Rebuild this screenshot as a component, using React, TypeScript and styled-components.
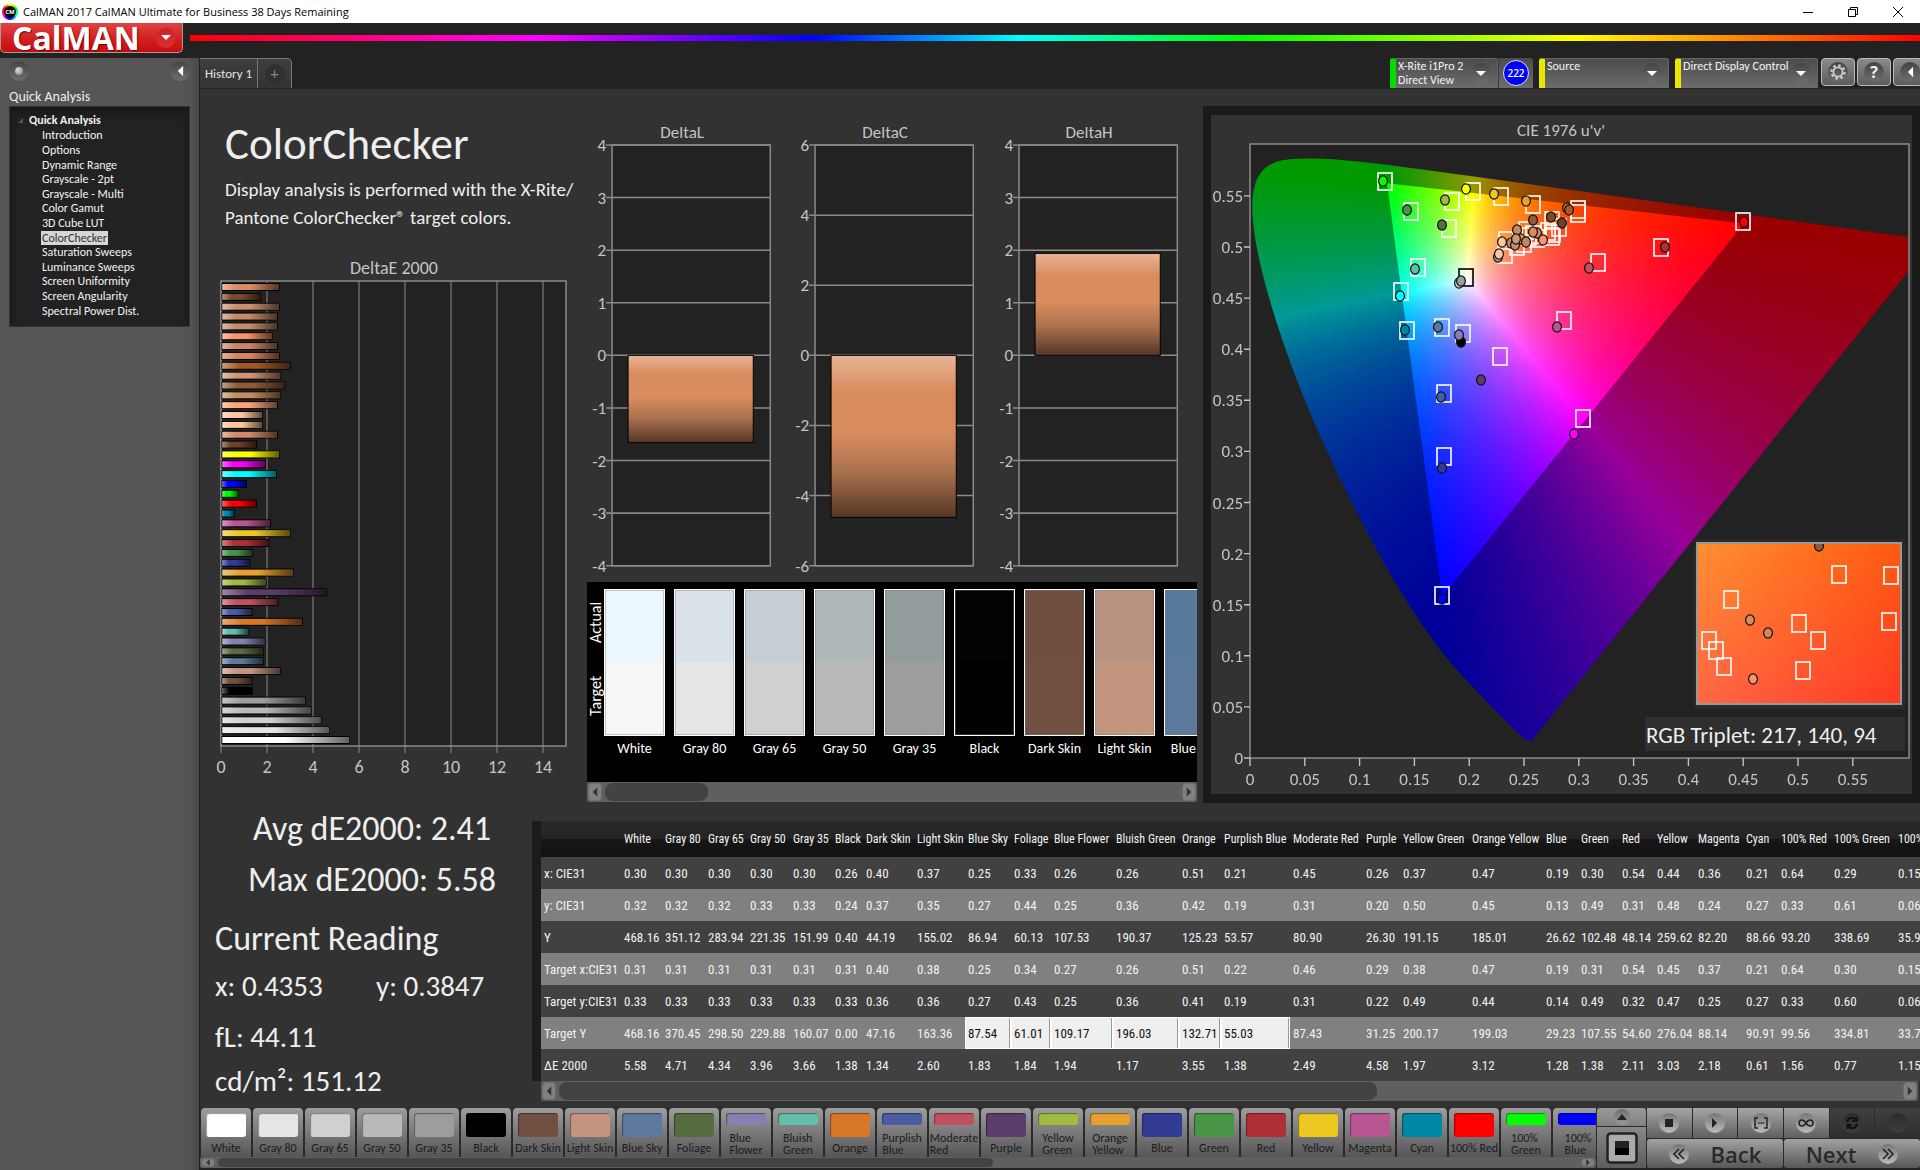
import React, { useLayoutEffect, useRef } from 'react';
import styled, { createGlobalStyle, css } from 'styled-components';

const UI = `Carlito, Calibri, Lato, sans-serif`;
const WIDE = `"Open Sans", "Noto Sans", sans-serif`;
const NARROW = `"Roboto Condensed", Carlito, sans-serif`;

const GlobalStyle = createGlobalStyle`
  * { box-sizing: border-box; }
  body { margin: 0; background: #222; color: #eee; font-family: ${UI}; }
  button { font-family: inherit; padding: 0; border: 0; color: inherit; cursor: pointer; }
  h1, h2, p, ul, dl, dd { margin: 0; padding: 0; }
`;

/* ---------- data ---------- */

type Patch = {
  name: string; target: string; actual: string; width: number;
  v: [string, string, string, string, string, string, string];
};

const patches: Patch[] = [
  { name: 'White', target: '#f6f6f6', actual: '#eaf7ff', width: 41, v: ['0.30', '0.32', '468.16', '0.31', '0.33', '468.16', '5.58'] },
  { name: 'Gray 80', target: '#e5e5e5', actual: '#d9e2e9', width: 43, v: ['0.30', '0.32', '351.12', '0.31', '0.33', '370.45', '4.71'] },
  { name: 'Gray 65', target: '#d0d0d0', actual: '#c5ced4', width: 42, v: ['0.30', '0.32', '283.94', '0.31', '0.33', '298.50', '4.34'] },
  { name: 'Gray 50', target: '#b9b9b9', actual: '#afb8bb', width: 43, v: ['0.30', '0.33', '221.35', '0.31', '0.33', '229.88', '3.96'] },
  { name: 'Gray 35', target: '#9d9d9d', actual: '#939c9d', width: 42, v: ['0.30', '0.33', '151.99', '0.31', '0.33', '160.07', '3.66'] },
  { name: 'Black', target: '#000000', actual: '#030306', width: 31, v: ['0.26', '0.24', '0.40', '0.31', '0.33', '0.00', '1.38'] },
  { name: 'Dark Skin', target: '#725041', actual: '#6e4e3f', width: 51, v: ['0.40', '0.37', '44.19', '0.40', '0.36', '47.16', '1.34'] },
  { name: 'Light Skin', target: '#c3957f', actual: '#b89382', width: 51, v: ['0.37', '0.35', '155.02', '0.38', '0.36', '163.36', '2.60'] },
  { name: 'Blue Sky', target: '#5d799d', actual: '#577a9d', width: 46, v: ['0.25', '0.27', '86.94', '0.25', '0.27', '87.54', '1.83'] },
  { name: 'Foliage', target: '#576c40', actual: '#576c40', width: 40, v: ['0.33', '0.44', '60.13', '0.34', '0.43', '61.01', '1.84'] },
  { name: 'Blue Flower', target: '#8480b0', actual: '#8480b0', width: 62, v: ['0.26', '0.25', '107.53', '0.27', '0.25', '109.17', '1.94'] },
  { name: 'Bluish Green', target: '#65bea9', actual: '#65bea9', width: 66, v: ['0.26', '0.36', '190.37', '0.26', '0.36', '196.03', '1.17'] },
  { name: 'Orange', target: '#d97728', actual: '#d97728', width: 42, v: ['0.51', '0.42', '125.23', '0.51', '0.41', '132.71', '3.55'] },
  { name: 'Purplish Blue', target: '#485ba3', actual: '#485ba3', width: 69, v: ['0.21', '0.19', '53.57', '0.22', '0.19', '55.03', '1.38'] },
  { name: 'Moderate Red', target: '#c25160', actual: '#c25160', width: 73, v: ['0.45', '0.31', '80.90', '0.46', '0.31', '87.43', '2.49'] },
  { name: 'Purple', target: '#5c3c69', actual: '#5c3c69', width: 37, v: ['0.26', '0.20', '26.30', '0.29', '0.22', '31.25', '4.58'] },
  { name: 'Yellow Green', target: '#9fbb42', actual: '#9fbb42', width: 69, v: ['0.37', '0.50', '191.15', '0.38', '0.49', '200.17', '1.97'] },
  { name: 'Orange Yellow', target: '#e6a12e', actual: '#e6a12e', width: 74, v: ['0.47', '0.45', '185.01', '0.47', '0.44', '199.03', '3.12'] },
  { name: 'Blue', target: '#323c95', actual: '#323c95', width: 35, v: ['0.19', '0.13', '26.62', '0.19', '0.14', '29.23', '1.28'] },
  { name: 'Green', target: '#489548', actual: '#489548', width: 41, v: ['0.30', '0.49', '102.48', '0.31', '0.49', '107.55', '1.38'] },
  { name: 'Red', target: '#ae2f38', actual: '#ae2f38', width: 35, v: ['0.54', '0.31', '48.14', '0.54', '0.32', '54.60', '2.11'] },
  { name: 'Yellow', target: '#ebc720', actual: '#ebc720', width: 41, v: ['0.44', '0.48', '259.62', '0.45', '0.47', '276.04', '3.03'] },
  { name: 'Magenta', target: '#ba5594', actual: '#ba5594', width: 48, v: ['0.36', '0.24', '82.20', '0.37', '0.25', '88.14', '2.18'] },
  { name: 'Cyan', target: '#0087a7', actual: '#0087a7', width: 35, v: ['0.21', '0.27', '88.66', '0.21', '0.27', '90.91', '0.61'] },
  { name: '100% Red', target: '#ff0000', actual: '#ff0000', width: 53, v: ['0.64', '0.33', '93.20', '0.64', '0.33', '99.56', '1.56'] },
  { name: '100% Green', target: '#00ff00', actual: '#00ff00', width: 64, v: ['0.29', '0.61', '338.69', '0.30', '0.60', '334.81', '0.77'] },
  { name: '100% Blue', target: '#0000ff', actual: '#0000ff', width: 64, v: ['0.15', '0.06', '35.94', '0.15', '0.06', '33.77', '1.15'] },
];

const rowLabels = ['x: CIE31', 'y: CIE31', 'Y', 'Target x:CIE31', 'Target y:CIE31', 'Target Y', 'ΔE 2000'];

const navItems = ['Introduction', 'Options', 'Dynamic Range', 'Grayscale - 2pt', 'Grayscale - Multi', 'Color Gamut', '3D Cube LUT',
  'ColorChecker', 'Saturation Sweeps', 'Luminance Sweeps', 'Screen Uniformity', 'Screen Angularity', 'Spectral Power Dist.'];

const deltaE: [string, number][] = [
  ['#d98c5e', 2.56], ['#7a4a2a', 1.75], ['#cb8f6c', 2.56], ['#c48b69', 2.48], ['#c18d6c', 2.48], ['#fa946e', 2.25],
  ['#cb8564', 2.48], ['#d5845c', 2.56], ['#a25a24', 3.05], ['#cf9672', 2.62], ['#8e5c36', 2.8], ['#c28d5f', 2.62],
  ['#ffa37b', 2.48], ['#ffc4a4', 1.82], ['#ffc798', 1.82], ['#d08a69', 2.48], ['#6f412a', 1.56], ['#ffff00', 2.56],
  ['#ff00ff', 1.95], ['#00ffff', 2.43], ['#0000ff', 1.13], ['#00ff00', 0.77], ['#ff0000', 1.56], ['#0087a7', 0.61],
  ['#ba5594', 2.18], ['#ebc720', 3.03], ['#ae2f38', 2.11], ['#489548', 1.38], ['#323c95', 1.28], ['#e6a12e', 3.16],
  ['#9fbb42', 1.99], ['#5c3c69', 4.6], ['#c25160', 2.49], ['#485ba3', 1.38], ['#d97728', 3.57], ['#65bea9', 1.2],
  ['#8480b0', 1.94], ['#576c40', 1.86], ['#5d799d', 1.86], ['#c3957f', 2.6], ['#725041', 1.37], ['#000000', 1.38],
  ['#9d9d9d', 3.69], ['#b9b9b9', 3.94], ['#d0d0d0', 4.37], ['#e5e5e5', 4.73], ['#ffffff', 5.6],
];

/* ---------- window chrome ---------- */

const Shell = styled.div`display: flex; flex-direction: column; min-height: 100vh; min-width: 1200px; overflow: hidden;`;

const TitleBar = styled.header`
  display: flex; align-items: center; height: 23px; padding-left: 2px; background: #fff; color: #000;
  font: 11px ${WIDE};
`;
const TitleText = styled.span`flex: 1; margin-left: 5px;`;
const AppBadge = styled.span`
  display: grid; place-items: center; width: 16px; height: 16px; border-radius: 50%;
  background: conic-gradient(#ff0, #0f0, #0ff, #00f, #f0f, #f00, #ff0);
  &::before { content: ''; grid-area: 1 / 1; width: 12px; height: 12px; border-radius: 50%; background: #000; }
`;
const AppBadgeText = styled.b`grid-area: 1 / 1; font: 700 6px ${WIDE}; color: #fff;`;
const WindowButton = styled.button`display: grid; place-items: center; width: 45px; height: 20px; background: none;`;

const BrandBar = styled.div`display: flex; align-items: flex-start; height: 35px; background: #222;`;
const BrandButton = styled.button`
  display: flex; align-items: center; justify-content: space-between; width: 183px; height: 30px; padding: 0 6px 0 11px;
  background: linear-gradient(#e04444, #d12020 55%, #c80c0c); border: 1px solid #a99; border-top: 0; border-radius: 0 0 5px 5px;
  color: #fff; text-shadow: 1px 1px 1px #600;
`;
const BrandName = styled.span`font: 700 32px/28px ${WIDE};`;
const Rainbow = styled.div`
  flex: 1; height: 6px; margin: 12px 0 0 7px;
  background: linear-gradient(90deg, #f00, #f0f 20%, #00f 36%, #0ff 48%, #0f0 61%, #ff0 80%, #f00);
`;

const Knob = styled.span<{ $red?: boolean; $light?: boolean }>`
  display: grid; place-items: center; flex: none; width: 20px; height: 20px; border-radius: 50%;
  background: ${p => p.$red ? 'linear-gradient(#c8222a, #dc3030)' : p.$light ? 'linear-gradient(#777, #bbb)' : 'linear-gradient(#444, #6e6e6e)'};
`;

const Body = styled.div`flex: 1; display: grid; grid-template-columns: 200px minmax(0, 1fr);`;

/* ---------- sidebar ---------- */

const Sidebar = styled.aside`padding: 3px 9px; background: linear-gradient(90deg, #555 190px, #474747); border-right: 1px solid #222;`;
const SideTools = styled.div`display: flex; justify-content: space-between;`;
const SideButton = styled.button`background: none; height: 20px;`;
const Ball = styled.i`width: 8px; height: 8px; border-radius: 50%; background: radial-gradient(circle at 35% 35%, #ddd, #777);`;
const SideHeading = styled.h2`margin: 6px 0 0; font: 14px/19px ${UI};`;
const Tree = styled.nav`height: 221px; padding: 5px 0 0 8px; background: #222; border: 1px solid #333; box-shadow: inset 0 6px 8px #181818; color: #f2f2f2;`;
const TreeRoot = styled.div`display: flex; align-items: center; gap: 6px; font: 700 12px/16px ${UI};`;
const TreeList = styled.ul`display: grid; grid-auto-rows: minmax(0, 1fr); height: 190px; padding-left: 23px; list-style: none;`;
const TreeItem = styled.li`display: flex; align-items: center;`;
const TreeLink = styled.a<{ $on?: boolean }>`
  padding: 0 1px; font: 12px/14px ${UI}; color: inherit; text-decoration: none;
  ${p => p.$on && css`background: #d6d6d6; color: #333;`}
`;

/* ---------- content header ---------- */

const Content = styled.main`display: flex; flex-direction: column;`;
const TopBar = styled.div`display: flex; height: 30px; background: #222; overflow: hidden;`;
const Tabs = styled.div`display: flex; flex: 1;`;
const Tab = styled.button<{ $last?: boolean }>`
  display: grid; place-items: center; width: ${p => p.$last ? 34 : 58}px; height: 30px; font-size: 13px; color: #e4e4e4;
  background: linear-gradient(#3e3e3e, #333); border: solid #777; border-width: 1px 1px 0 0;
  border-radius: 0 ${p => p.$last ? 5 : 0}px 0 0;
`;
const AddMark = styled.span`width: 20px; border-radius: 50%; background: #303030; color: #8a8a8a; font: 16px/20px ${UI};`;
const Devices = styled.div`display: flex; gap: 6px; margin-right: 3px;`;
const Device = styled.button<{ $c: string; $w: number }>`
  display: flex; justify-content: space-between; width: ${p => p.$w}px; height: 30px; padding: 0 6px 0 2px; text-align: left;
  font: 12px/14px ${UI}; color: #f2f2f2; background: linear-gradient(#4c4c4c, #6c6c6c); border: solid #666; border-width: 1px 1px 0 0;
  border-radius: 3px 3px 0 0; border-left: 6px solid ${p => p.$c};
`;
const DeviceArrow = styled.span`display: grid; padding-top: 4px;`;
const MeterGroup = styled.div`display: flex;`;
const MeterCount = styled.button`
  display: grid; place-items: center; width: 35px; height: 30px; background: linear-gradient(#4c4c4c, #6c6c6c);
  border-radius: 0 3px 0 0; border-left: 1px solid #3a3a3a;
`;
const CountDot = styled.span`
  display: grid; place-items: center; width: 26px; height: 26px; border-radius: 50%; border: 1px solid #dde; background: #00f;
  font: 600 10px ${WIDE}; color: #fff;
`;
const ToolButtons = styled.div`display: flex; gap: 2px; width: 99px; overflow: hidden;`;
const ToolButton = styled.button`
  display: grid; place-items: center; flex: none; width: 34px; height: 28px; border: 1px solid #bbb; border-radius: 4px;
  background: linear-gradient(#8a8a8a, #5c5c5c);
`;
const HelpMark = styled.b`font: 700 16px/18px ${WIDE}; color: #eee;`;

/* ---------- workspace ---------- */

const Workspace = styled.section`flex: 1; padding-bottom: 5px; background: #323232; box-shadow: inset 0 1px #222;`;
const Upper = styled.div`display: grid; grid-template-columns: minmax(0, 387fr) minmax(0, 616fr) minmax(0, 717fr); align-items: start;`;
const Title = styled.h1`padding: 24px 0 0 25px; font: 45px/64px ${UI};`;
const Lead = styled.p`padding-left: 25px; margin-bottom: 23px; font: 19px/28px ${UI}; white-space: nowrap;`;
const Chart = styled.svg`display: block; width: 100%; height: auto; font-family: ${UI}; fill: #c4c4c4;`;

const Middle = styled.div`padding: 34px 6px 0 0;`;
const DeltaRow = styled.div`display: grid; grid-template-columns: repeat(3, 1fr);`;

const SwatchPanel = styled.div`display: flex; height: 200px; padding-top: 7px; background: #000; overflow: hidden;`;
const SideLabels = styled.div`display: grid; grid-template-rows: 66px 81px; flex: none; width: 17px; height: 147px;`;
const SideLabel = styled.span`display: grid; place-items: center; writing-mode: vertical-rl; transform: rotate(180deg); font: 16px/17px ${UI}; color: #fff;`;
const SwatchList = styled.div`display: flex; gap: 9px; min-width: 0; overflow: hidden;`;
const Swatch = styled.figure`flex: none; width: 61px; margin: 0;`;
const SwatchColor = styled.div<{ $a: string; $t: string }>`
  height: 147px; border: 1px solid #fff; background: linear-gradient(${p => p.$a} 50%, ${p => p.$t} 50%);
  box-shadow: inset 0 0 0 1px rgba(120, 120, 120, .4);
`;
const SwatchName = styled.figcaption`text-align: center; font: 14px/26px ${UI}; color: #fff; white-space: nowrap;`;

const Track = styled.div<{ $h: number }>`display: flex; gap: 3px; height: ${p => p.$h}px; padding: 1px; background: #5f5f5f; border-radius: 2px;`;
const TrackArrow = styled.button`display: grid; place-items: center; flex: none; width: 14px; background: #808080; border: 1px solid #6c6c6c; border-radius: 4px;`;
const TrackLane = styled.div`flex: 1; display: flex;`;
const Thumb = styled.div<{ $share: number }>`width: ${p => p.$share}%; background: #434343; border-radius: 8px;`;

const CiePanel = styled.div`margin-top: 18px; padding: 9px 8px; background: #1a1a1a;`;
const CieInner = styled.div`background: #323232;`;
const Diagram = styled.canvas`display: block; width: 100%; height: 100%;`;

const Lower = styled.div`display: grid; grid-template-columns: 332px minmax(0, 1fr);`;
const Readings = styled.div`white-space: nowrap; color: #eee;`;
const Stat = styled.p`padding-left: 12px; text-align: center; font: 34px/51px ${UI};`;
const ReadingHead = styled.h2`margin-top: 8px; padding-left: 15px; font: 34px/51px ${UI};`;
const ReadingPair = styled.div`display: grid; grid-template-columns: 161px 1fr; margin-bottom: 7px; padding-left: 15px;`;
const Reading = styled.p`font: 29px/44px ${UI};`;
const ReadingBlock = styled.div`padding-left: 15px;`;

const TableArea = styled.div`padding-top: 18px; overflow: hidden;`;
const TableClip = styled.div`overflow: hidden; border-left: 9px solid #1c1c1c; background: #414141;`;
const Table = styled.table`table-layout: fixed; width: 1418px; border-collapse: collapse; font-family: ${NARROW}; color: #f2f2f2; white-space: nowrap;`;
const HeadCell = styled.th`
  height: 36px; padding: 0 0 0 3px; text-align: left; font-size: 12px; font-weight: 400;
  background: linear-gradient(#2a2a2a, #242424 49%, #171717 50%, #111);
`;
const Row = styled.tr`height: 32px; background: #414141; &:nth-child(even) { background: #808080; }`;
const cell = css`padding: 0 0 0 3px; text-align: left; font-size: 13px; font-weight: 400;`;
const RowHead = styled.th`${cell}`;
const Cell = styled.td<{ $hot?: boolean }>`
  ${cell}
  ${p => p.$hot && css`background: #efefef; color: #111; box-shadow: inset 0 0 0 1px #fff, inset -2px 0 #999;`}
`;
const TableTrack = styled.div`padding: 0 2px 0 9px;`;

/* ---------- bottom toolbar ---------- */

const BottomBar = styled.footer`display: flex; height: 62px; background: #2a2a2a; border-bottom: 2px solid #222;`;
const Palette = styled.div`flex: 1; min-width: 0;`;
const PatchRow = styled.div`display: flex; gap: 2px; height: 49px; padding-left: 1px; overflow: hidden;`;
const PatchButton = styled.button`
  display: flex; flex-direction: column; align-items: center; justify-content: space-between; flex: none; width: 50px; height: 49px;
  padding: 5px 0 1px; border-radius: 4px 4px 0 0; background: linear-gradient(#9c9c9c, #7d7d7d 45%, #565656);
  font: 12px/12px ${UI}; color: #1c1c1c; text-align: left;
`;
const PatchChip = styled.span<{ $c: string; $low: boolean }>`
  width: 40px; height: ${p => p.$low ? 12 : 24}px; border-radius: 3px; background: ${p => p.$c}; box-shadow: inset 1px 1px 1px rgba(0, 0, 0, .4);
`;
const PatchName = styled.span<{ $wrap: boolean }>`white-space: ${p => p.$wrap ? 'pre-line' : 'nowrap'}; padding-bottom: ${p => p.$wrap ? 0 : 2}px;`;

const View = styled.div`display: flex; flex-direction: column; gap: 1px; width: 49px; margin: 0 1px;`;
const ViewUp = styled.button`display: grid; place-items: center; height: 18px; overflow: hidden; border-radius: 3px 3px 0 0; background: linear-gradient(#999, #808080);`;
const SmallKnob = styled.span`display: grid; place-items: center; width: 16px; height: 16px; border-radius: 50%; background: linear-gradient(#707070, #999);`;
const ViewStop = styled.button`display: grid; place-items: center; flex: 1; background: linear-gradient(#888, #5c5c5c);`;
const Transport = styled.div`display: grid; grid-template: 30px 29px / repeat(6, 1fr); gap: 1px; width: 273px;`;
const TransportButton = styled.button<{ $off?: boolean }>`
  display: grid; place-items: center; background: ${p => p.$off ? 'linear-gradient(#404040, #2e2e2e)' : 'linear-gradient(#a6a6a6, #5f5f5f)'};
`;
const DarkKnob = styled(Knob)`background: linear-gradient(#2c2c2c, #3e3e3e);`;
const StepButton = styled.button`
  grid-column: span 3; display: flex; align-items: center; justify-content: center; gap: 22px;
  background: linear-gradient(#a2a2a2, #585858); border-radius: 3px; font: 600 22px/28px ${WIDE}; color: #2a2a2a;
`;

/* ---------- small drawings ---------- */

const Down = () => <svg width="12" height="7" aria-hidden="true"><path d="M1 1h10L6 6z" fill="#fff" /></svg>;
const Left = ({ c = '#fff', w = 8, h = 12 }: { c?: string; w?: number; h?: number }) => (
  <svg width={w} height={h} viewBox="0 0 8 12" aria-hidden="true"><path d="M7 0v12L1 6z" fill={c} /></svg>
);
const Right = ({ c = '#333', w = 7, h = 10 }: { c?: string; w?: number; h?: number }) => (
  <svg width={w} height={h} viewBox="0 0 8 12" aria-hidden="true"><path d="M1 0v12l6-6z" fill={c} /></svg>
);
const Chevrons = ({ flip }: { flip?: boolean }) => (
  <svg width="14" height="14" viewBox="0 0 14 14" fill="none" stroke="#222" strokeWidth="1.6" aria-hidden="true">
    <path d={flip ? 'M2 2l5 5-5 5M7 2l5 5-5 5' : 'M7 2L2 7l5 5M12 2L7 7l5 5'} />
  </svg>
);
const Gear = () => (
  <svg width="18" height="18" viewBox="0 0 18 18" fill="none" stroke="#d0d0d0" aria-hidden="true">
    <circle cx="9" cy="9" r="4.6" strokeWidth="1.8" />
    <circle cx="9" cy="9" r="6.6" strokeWidth="2.2" strokeDasharray="2.6 2.58" />
  </svg>
);

function ScrollTrack({ height, share, label }: { height: number; share: number; label: string }) {
  return (
    <Track $h={height}>
      <TrackArrow aria-label={`${label} left`}><Left c="#333" w={6} h={height > 14 ? 12 : 7} /></TrackArrow>
      <TrackLane><Thumb $share={share} /></TrackLane>
      <TrackArrow aria-label={`${label} right`}><Right w={6} h={height > 14 ? 12 : 7} /></TrackArrow>
    </Track>
  );
}

/* ---------- charts ---------- */

function DeltaEChart() {
  const unit = 23;
  const pitch = 453 / 46;
  return (
    <Chart viewBox="0 0 387 528" role="img" aria-label="DeltaE 2000">
      <defs>
        <linearGradient id="sheenX">
          <stop offset="0" stopColor="#fff" stopOpacity=".4" /><stop offset=".25" stopColor="#fff" stopOpacity="0" />
          <stop offset=".5" stopColor="#000" stopOpacity="0" /><stop offset="1" stopColor="#000" stopOpacity=".62" />
        </linearGradient>
      </defs>
      <text x="194" y="19" fontSize="18" textAnchor="middle">DeltaE 2000</text>
      <rect x="21" y="26" width="345" height="465" fill="#222" stroke="#8a8a8a" strokeWidth="1.5" />
      {[0, 2, 4, 6, 8, 10, 12, 14].map(n => (
        <g key={n}>
          <path d={`M${21 + n * unit} 26v472`} stroke="#8a8a8a" />
          <text x={21 + n * unit} y="518" fontSize="18" textAnchor="middle">{n}</text>
        </g>
      ))}
      {deltaE.map(([c, v], i) => (
        <g key={i}>
          <rect x="22" y={28.5 + i * pitch} width={v * unit - 1.5} height="7" fill={c} stroke="#000" />
          <rect x="22" y={29 + i * pitch} width={v * unit - 2} height="6" fill="url(#sheenX)" />
        </g>
      ))}
    </Chart>
  );
}

function DeltaChart({ name, max, step, value }: { name: string; max: number; step: number; value: number }) {
  const y = (n: number) => 23 + (max - n) * 420 / (2 * max);
  const ticks: number[] = [];
  for (let n = max; n >= -max; n -= step) ticks.push(n);
  const top = Math.min(y(0), y(value));
  const size = Math.abs(y(0) - y(value));
  return (
    <Chart viewBox="0 0 203 459" role="img" aria-label={name}>
      <defs>
        <linearGradient id={`sheen${name}`} x2="0" y2="1">
          <stop offset="0" stopColor="#e8b596" /><stop offset=".22" stopColor="#d98c5e" />
          <stop offset=".48" stopColor="#d98c5e" /><stop offset=".72" stopColor="#a9714e" /><stop offset="1" stopColor="#563626" />
        </linearGradient>
      </defs>
      <text x="95" y="16" fontSize="17" textAnchor="middle">{name}</text>
      <rect x="25" y="23" width="158" height="420" fill="#222" stroke="#8a8a8a" strokeWidth="1.5" />
      {ticks.map(n => (
        <g key={n}>
          <path d={`M19 ${y(n)}h164`} stroke="#8a8a8a" strokeWidth="1.5" />
          <text x="19" y={y(n) + 6} fontSize="17" textAnchor="end">{n}</text>
        </g>
      ))}
      <rect x="41" y={top} width="125" height={size} fill={`url(#sheen${name})`} stroke="#000" />
    </Chart>
  );
}

const locusXY: [number, number][] = [
  [.1741, .005], [.1714, .0051], [.1689, .0069], [.1644, .0109], [.1566, .0177], [.144, .0297], [.1355, .0399], [.1241, .0578],
  [.1096, .0868], [.0913, .1327], [.0687, .2007], [.0454, .295], [.0235, .4127], [.0082, .5384], [.0039, .6548], [.0139, .7502],
  [.0389, .812], [.0743, .8338], [.1142, .8262], [.1547, .8059], [.1929, .7816], [.2296, .7543], [.3016, .6923], [.3731, .6245],
  [.4441, .5547], [.5125, .4866], [.5752, .4242], [.627, .3725], [.6658, .334], [.6915, .3083], [.719, .2809], [.7347, .2653],
];
const PLOT_W = 659;
const PLOT_H = 614;
const SX = 1096;
const SY = 1022;
const plotPoint = ([x, y]: [number, number]): [number, number] => {
  const d = -2 * x + 12 * y + 3;
  return [4 * x / d * SX, PLOT_H - 9 * y / d * SY];
};

/* Fills the locus with the brightest linear RGB of each chromaticity, dimmed outside the Rec. 709 triangle. */
function Chromaticity() {
  const ref = useRef<HTMLCanvasElement>(null);
  useLayoutEffect(() => {
    const ctx = ref.current?.getContext('2d');
    if (!ctx) return;
    const img = ctx.createImageData(PLOT_W, PLOT_H);
    for (let py = 0; py < PLOT_H; py++) {
      for (let px = 0; px < PLOT_W; px++) {
        const u = px / SX;
        const v = Math.max((PLOT_H - py) / SY, .001);
        const d = 6 * u - 16 * v + 12;
        const x = 9 * u / d;
        const y = 4 * v / d;
        const X = x / y;
        const Z = (1 - x - y) / y;
        const rgb = [3.2406 * X - 1.5372 - .4986 * Z, -.9689 * X + 1.8758 + .0415 * Z, .0557 * X - .204 + 1.057 * Z].map(c => Math.max(c, 0));
        const m = Math.max(...rgb) || 1;
        const o = (py * PLOT_W + px) * 4;
        rgb.forEach((c, k) => { img.data[o + k] = 255 * c / m; });
        img.data[o + 3] = 255;
      }
    }
    ctx.putImageData(img, 0, 0);
    ctx.beginPath();
    ctx.rect(0, 0, PLOT_W, PLOT_H);
    ([[.64, .33], [.3, .6], [.15, .06]] as [number, number][]).map(plotPoint).forEach(([x, y], i) => i ? ctx.lineTo(x, y) : ctx.moveTo(x, y));
    ctx.closePath();
    ctx.fillStyle = 'rgba(0, 0, 0, .4)';
    ctx.fill('evenodd');
    ctx.globalCompositeOperation = 'destination-in';
    ctx.beginPath();
    const pts = locusXY.map(plotPoint);
    ctx.moveTo(...pts[0]);
    for (let i = 1; i < pts.length - 1; i++) {
      ctx.quadraticCurveTo(pts[i][0], pts[i][1], (pts[i][0] + pts[i + 1][0]) / 2, (pts[i][1] + pts[i + 1][1]) / 2);
    }
    ctx.lineTo(...pts[pts.length - 1]);
    ctx.closePath();
    ctx.fillStyle = '#000';
    ctx.fill();
  }, []);
  return <Diagram ref={ref} width={PLOT_W} height={PLOT_H} />;
}

const targets: [number, number][] = [
  [174, 66], [262, 76], [290, 81], [322, 89], [241, 86], [200, 96], [238, 113], [367, 94], [367, 98], [532, 106], [450, 132],
  [387, 147], [207, 152], [190, 176], [196, 215], [231, 212], [252, 218], [289, 241], [353, 205], [233, 278], [372, 303],
  [233, 341], [231, 480], [294, 139], [295, 125], [306, 131], [315, 115], [326, 123], [341, 105], [337, 116], [341, 121],
  [348, 112], [342, 118], [318, 121], [313, 128], [322, 119],
];
const measured: [number, number, string][] = [
  [172, 66, '#00ff00'], [255, 74, '#ffff00'], [283, 79, '#ebc720'], [315, 86, '#e6a12e'], [234, 85, '#9fbb42'], [196, 95, '#489548'],
  [231, 110, '#576c40'], [356, 93, '#d97728'], [358, 95, '#a25a24'], [533, 107, '#ff0000'], [454, 132, '#ae2f38'], [378, 153, '#c25160'],
  [204, 154, '#65bea9'], [248, 168, '#d0d0d0'], [250, 166, '#9d9d9d'], [189, 181, '#00ffff'], [194, 215, '#0087a7'], [227, 212, '#5d799d'],
  [250, 227, '#000000'], [248, 220, '#8480b0'], [270, 265, '#5c3c69'], [346, 212, '#ba5594'], [230, 282, '#485ba3'], [363, 319, '#ff00ff'],
  [231, 353, '#323c95'], [231, 484, '#0000ff'], [340, 102, '#7a4a2a'], [351, 108, '#6f412a'], [322, 105, '#8e5c36'], [306, 115, '#c28d5f'],
  [287, 142, '#c3957f'], [288, 139, '#ffc4a4'], [291, 127, '#ffc798'], [300, 128, '#c18d6c'], [304, 130, '#c48b69'], [310, 124, '#cb8f6c'],
  [305, 124, '#cf9672'], [315, 127, '#cb8564'], [326, 118, '#d5845c'], [322, 117, '#d98c5e'], [332, 125, '#fa946e'],
];
const insetTargets: [number, number][] = [
  [628, 459], [680, 460], [520, 484], [588, 508], [678, 506], [498, 525], [505, 535], [513, 551], [607, 525], [592, 555],
];
const insetMeasured: [number, number, string][] = [[608, 431, '#8e5c36'], [539, 505, '#d98c5e'], [557, 518, '#d5845c'], [542, 564, '#fa946e']];

const Square = ({ x, y, c = '#fff' }: { x: number; y: number; c?: string }) => (
  <rect x={x - 7} y={y - 8} width="14" height="17" fill="none" stroke={c} strokeWidth="1.6" />
);
const Dot = ({ x, y, c }: { x: number; y: number; c: string }) => <ellipse cx={x} cy={y} rx="4.4" ry="5.2" fill={c} stroke="#111" strokeWidth="1.2" />;

function CieChart() {
  const ticks = Array.from({ length: 12 }, (_, i) => i * .05);
  const label = (n: number) => String(Math.round(n * 100) / 100);
  return (
    <Chart viewBox="0 0 701 679" role="img" aria-label="CIE 1976 u'v'">
      <defs>
        <linearGradient id="insetA"><stop stopColor="#ff9030" /><stop offset="1" stopColor="#ff5a12" /></linearGradient>
        <linearGradient id="insetB"><stop stopColor="#ff6646" /><stop offset="1" stopColor="#ff3a22" /></linearGradient>
        <linearGradient id="fade" x2="0" y2="1"><stop stopColor="#000" /><stop offset="1" stopColor="#fff" /></linearGradient>
        <mask id="fadeMask"><rect x="486" y="428" width="204" height="161" fill="url(#fade)" /></mask>
        <clipPath id="insetClip"><rect x="487" y="429" width="202" height="159" /></clipPath>
      </defs>
      <text x="350" y="21" fontSize="17" textAnchor="middle">CIE 1976 u'v'</text>
      <rect x="39" y="29" width={PLOT_W} height={PLOT_H} fill="#222" />
      <foreignObject x="39" y="29" width={PLOT_W} height={PLOT_H}><Chromaticity /></foreignObject>
      <rect x="39" y="29" width={PLOT_W} height={PLOT_H} fill="none" stroke="#8a8a8a" strokeWidth="1.5" />
      {ticks.map(n => (
        <g key={n}>
          <path d={`M${39 + n * SX} 643v8M33 ${643 - n * SY}h6`} stroke="#c4c4c4" strokeWidth="1.4" />
          <text x={39 + n * SX} y="670" fontSize="17" textAnchor="middle">{label(n)}</text>
          <text x="32" y={649 - n * SY} fontSize="17" textAnchor="end">{label(n)}</text>
        </g>
      ))}
      {targets.map(([x, y], i) => <Square key={i} x={x} y={y} />)}
      <Square x={255} y={162} c="#000" />
      {measured.map(([x, y, c], i) => <Dot key={i} x={x} y={y} c={c} />)}
      <rect x="483" y="424" width="211" height="170" fill="#2a2a2a" />
      <rect x="486" y="428" width="204" height="161" fill="url(#insetA)" />
      <rect x="486" y="428" width="204" height="161" fill="url(#insetB)" mask="url(#fadeMask)" />
      <g clipPath="url(#insetClip)">
        {insetTargets.map(([x, y], i) => <Square key={i} x={x} y={y} />)}
        {insetMeasured.map(([x, y, c], i) => <Dot key={i} x={x} y={y} c={c} />)}
      </g>
      <rect x="486" y="428" width="204" height="161" fill="none" stroke="#999" strokeWidth="2" />
      <rect x="434" y="602" width="260" height="34" fill="#2f2f2f" />
      <text x="435" y="628" fontSize="23" fill="#eee">RGB Triplet: 217, 140, 94</text>
    </Chart>
  );
}

/* ---------- page ---------- */

export default function App() {
  return (
    <Shell>
      <GlobalStyle />
      <TitleBar>
        <AppBadge><AppBadgeText>CM</AppBadgeText></AppBadge>
        <TitleText>CalMAN 2017 CalMAN Ultimate for Business 38 Days Remaining</TitleText>
        <WindowButton aria-label="Minimize"><svg width="10" height="10"><path d="M0 5.5h10" stroke="#000" /></svg></WindowButton>
        <WindowButton aria-label="Restore">
          <svg width="10" height="10" fill="none" stroke="#000"><path d="M.5 2.5h7v7h-7zM2.5 2.5v-2h7v7h-2" /></svg>
        </WindowButton>
        <WindowButton aria-label="Close"><svg width="10" height="10"><path d="M0 0l10 10M10 0L0 10" stroke="#000" /></svg></WindowButton>
      </TitleBar>
      <BrandBar>
        <BrandButton><BrandName>CalMAN</BrandName><Knob $red><Down /></Knob></BrandButton>
        <Rainbow />
      </BrandBar>
      <Body>
        <Sidebar>
          <SideTools>
            <SideButton aria-label="Pin"><Knob><Ball /></Knob></SideButton>
            <SideButton aria-label="Collapse"><Knob><Left w={7} /></Knob></SideButton>
          </SideTools>
          <SideHeading>Quick Analysis</SideHeading>
          <Tree>
            <TreeRoot><svg width="5" height="5" aria-hidden="true"><path d="M5 0v5H0z" fill="#555" /></svg>Quick Analysis</TreeRoot>
            <TreeList>
              {navItems.map(n => <TreeItem key={n}><TreeLink href="#" $on={n === 'ColorChecker'}>{n}</TreeLink></TreeItem>)}
            </TreeList>
          </Tree>
        </Sidebar>
        <Content>
          <TopBar>
            <Tabs>
              <Tab>History 1</Tab>
              <Tab $last aria-label="Add tab"><AddMark>+</AddMark></Tab>
            </Tabs>
            <Devices>
              <MeterGroup>
                <Device $c="#0d0" $w={108}><span>X-Rite i1Pro 2<br />Direct View</span><DeviceArrow><Knob><Down /></Knob></DeviceArrow></Device>
                <MeterCount><CountDot>222</CountDot></MeterCount>
              </MeterGroup>
              <Device $c="#e8e800" $w={130}><span>Source</span><DeviceArrow><Knob><Down /></Knob></DeviceArrow></Device>
              <Device $c="#e8e800" $w={143}><span>Direct Display Control</span><DeviceArrow><Knob><Down /></Knob></DeviceArrow></Device>
            </Devices>
            <ToolButtons>
              <ToolButton aria-label="Settings"><Knob><Gear /></Knob></ToolButton>
              <ToolButton aria-label="Help"><Knob><HelpMark>?</HelpMark></Knob></ToolButton>
              <ToolButton aria-label="Collapse panel"><Knob><Left w={7} /></Knob></ToolButton>
            </ToolButtons>
          </TopBar>
          <Workspace>
            <Upper>
              <div>
                <Title>ColorChecker</Title>
                <Lead>Display analysis is performed with the X-Rite/<br />Pantone ColorChecker® target colors.</Lead>
                <DeltaEChart />
              </div>
              <Middle>
                <DeltaRow>
                  <DeltaChart name="DeltaL" max={4} step={1} value={-1.66} />
                  <DeltaChart name="DeltaC" max={6} step={2} value={-4.62} />
                  <DeltaChart name="DeltaH" max={4} step={1} value={1.94} />
                </DeltaRow>
                <SwatchPanel>
                  <SideLabels><SideLabel>Actual</SideLabel><SideLabel>Target</SideLabel></SideLabels>
                  <SwatchList>
                    {patches.slice(0, 9).map(p => (
                      <Swatch key={p.name}><SwatchColor $a={p.actual} $t={p.target} /><SwatchName>{p.name}</SwatchName></Swatch>
                    ))}
                  </SwatchList>
                </SwatchPanel>
                <ScrollTrack height={20} share={18} label="Scroll swatches" />
              </Middle>
              <CiePanel><CieInner><CieChart /></CieInner></CiePanel>
            </Upper>
            <Lower>
              <Readings>
                <Stat>Avg dE2000: 2.41</Stat>
                <Stat>Max dE2000: 5.58</Stat>
                <ReadingHead>Current Reading</ReadingHead>
                <ReadingPair><Reading>x: 0.4353</Reading><Reading>y: 0.3847</Reading></ReadingPair>
                <ReadingBlock><Reading>fL: 44.11</Reading><Reading>cd/m²: 151.12</Reading></ReadingBlock>
              </Readings>
              <TableArea>
                <TableClip>
                  <Table>
                    <colgroup><col width={80} />{patches.map(p => <col key={p.name} width={p.width} />)}</colgroup>
                    <thead><tr><HeadCell aria-label="Measure" />{patches.map(p => <HeadCell key={p.name} scope="col">{p.name}</HeadCell>)}</tr></thead>
                    <tbody>
                      {rowLabels.map((label, r) => (
                        <Row key={label}>
                          <RowHead scope="row">{label}</RowHead>
                          {patches.map((p, i) => <Cell key={p.name} $hot={r === 5 && i > 7 && i < 14}>{p.v[r]}</Cell>)}
                        </Row>
                      ))}
                    </tbody>
                  </Table>
                </TableClip>
                <TableTrack><ScrollTrack height={20} share={61} label="Scroll table" /></TableTrack>
              </TableArea>
            </Lower>
          </Workspace>
          <BottomBar>
            <Palette>
              <PatchRow>
                {patches.map(p => {
                  const wrap = p.name.length > 10 || /100% (G|B)/.test(p.name);
                  return (
                    <PatchButton key={p.name}>
                      <PatchChip $c={p.name === 'White' ? '#fff' : p.target} $low={wrap} />
                      <PatchName $wrap={wrap}>{wrap ? p.name.replace(' ', '\n') : p.name}</PatchName>
                    </PatchButton>
                  );
                })}
              </PatchRow>
              <ScrollTrack height={11} share={57} label="Scroll patches" />
            </Palette>
            <View>
              <ViewUp aria-label="Expand"><SmallKnob><svg width="10" height="6"><path d="M0 6h10L5 0z" fill="#222" /></svg></SmallKnob></ViewUp>
              <ViewStop aria-label="Pattern window">
                <svg width="32" height="32" viewBox="0 0 32 32">
                  <rect x="1.5" y="1.5" width="29" height="29" rx="3" fill="#aaa" stroke="#222" strokeWidth="2.5" />
                  <path d="M9 9h14v7H9z" fill="#222" /><path d="M9 16h14v7H9z" fill="#000" />
                </svg>
              </ViewStop>
            </View>
            <Transport>
              <TransportButton aria-label="Stop"><Knob $light><svg width="8" height="8"><path d="M0 0h8v8H0z" fill="#222" /></svg></Knob></TransportButton>
              <TransportButton aria-label="Play"><Knob $light><Right c="#222" w={9} h={10} /></Knob></TransportButton>
              <TransportButton aria-label="Read series">
                <Knob $light>
                  <svg width="14" height="12" fill="none" stroke="#222" strokeWidth="1.5"><path d="M4 1H1v10h3M10 1h3v10h-3M4 6h1.5M6.3 6h1.5M8.6 6h1.5" /></svg>
                </Knob>
              </TransportButton>
              <TransportButton aria-label="Read continuously">
                <Knob $light>
                  <svg width="16" height="8" fill="none" stroke="#222" strokeWidth="1.5"><path d="M8 4C6.500 1.500 5.500 1 4 1a3 3 0 0 0 0 6c1.500 0 2.500-.5 4-3s2.500-3 4-3a3 3 0 0 1 0 6c-1.500 0-2.500-.5-4-3z" /></svg>
                </Knob>
              </TransportButton>
              <TransportButton $off aria-label="Refresh">
                <DarkKnob>
                  <svg width="14" height="14" viewBox="0 0 14 14" fill="none" stroke="#111" strokeWidth="2.2"><path d="M2 6a5 5 0 0 1 9-2M12 8a5 5 0 0 1-9 2M11.500 1v4h-4M2.500 13V9h4" /></svg>
                </DarkKnob>
              </TransportButton>
              <TransportButton $off aria-label="Record"><DarkKnob /></TransportButton>
              <StepButton><Knob $light><Chevrons /></Knob>Back</StepButton>
              <StepButton>Next<Knob $light><Chevrons flip /></Knob></StepButton>
            </Transport>
          </BottomBar>
        </Content>
      </Body>
    </Shell>
  );
}
